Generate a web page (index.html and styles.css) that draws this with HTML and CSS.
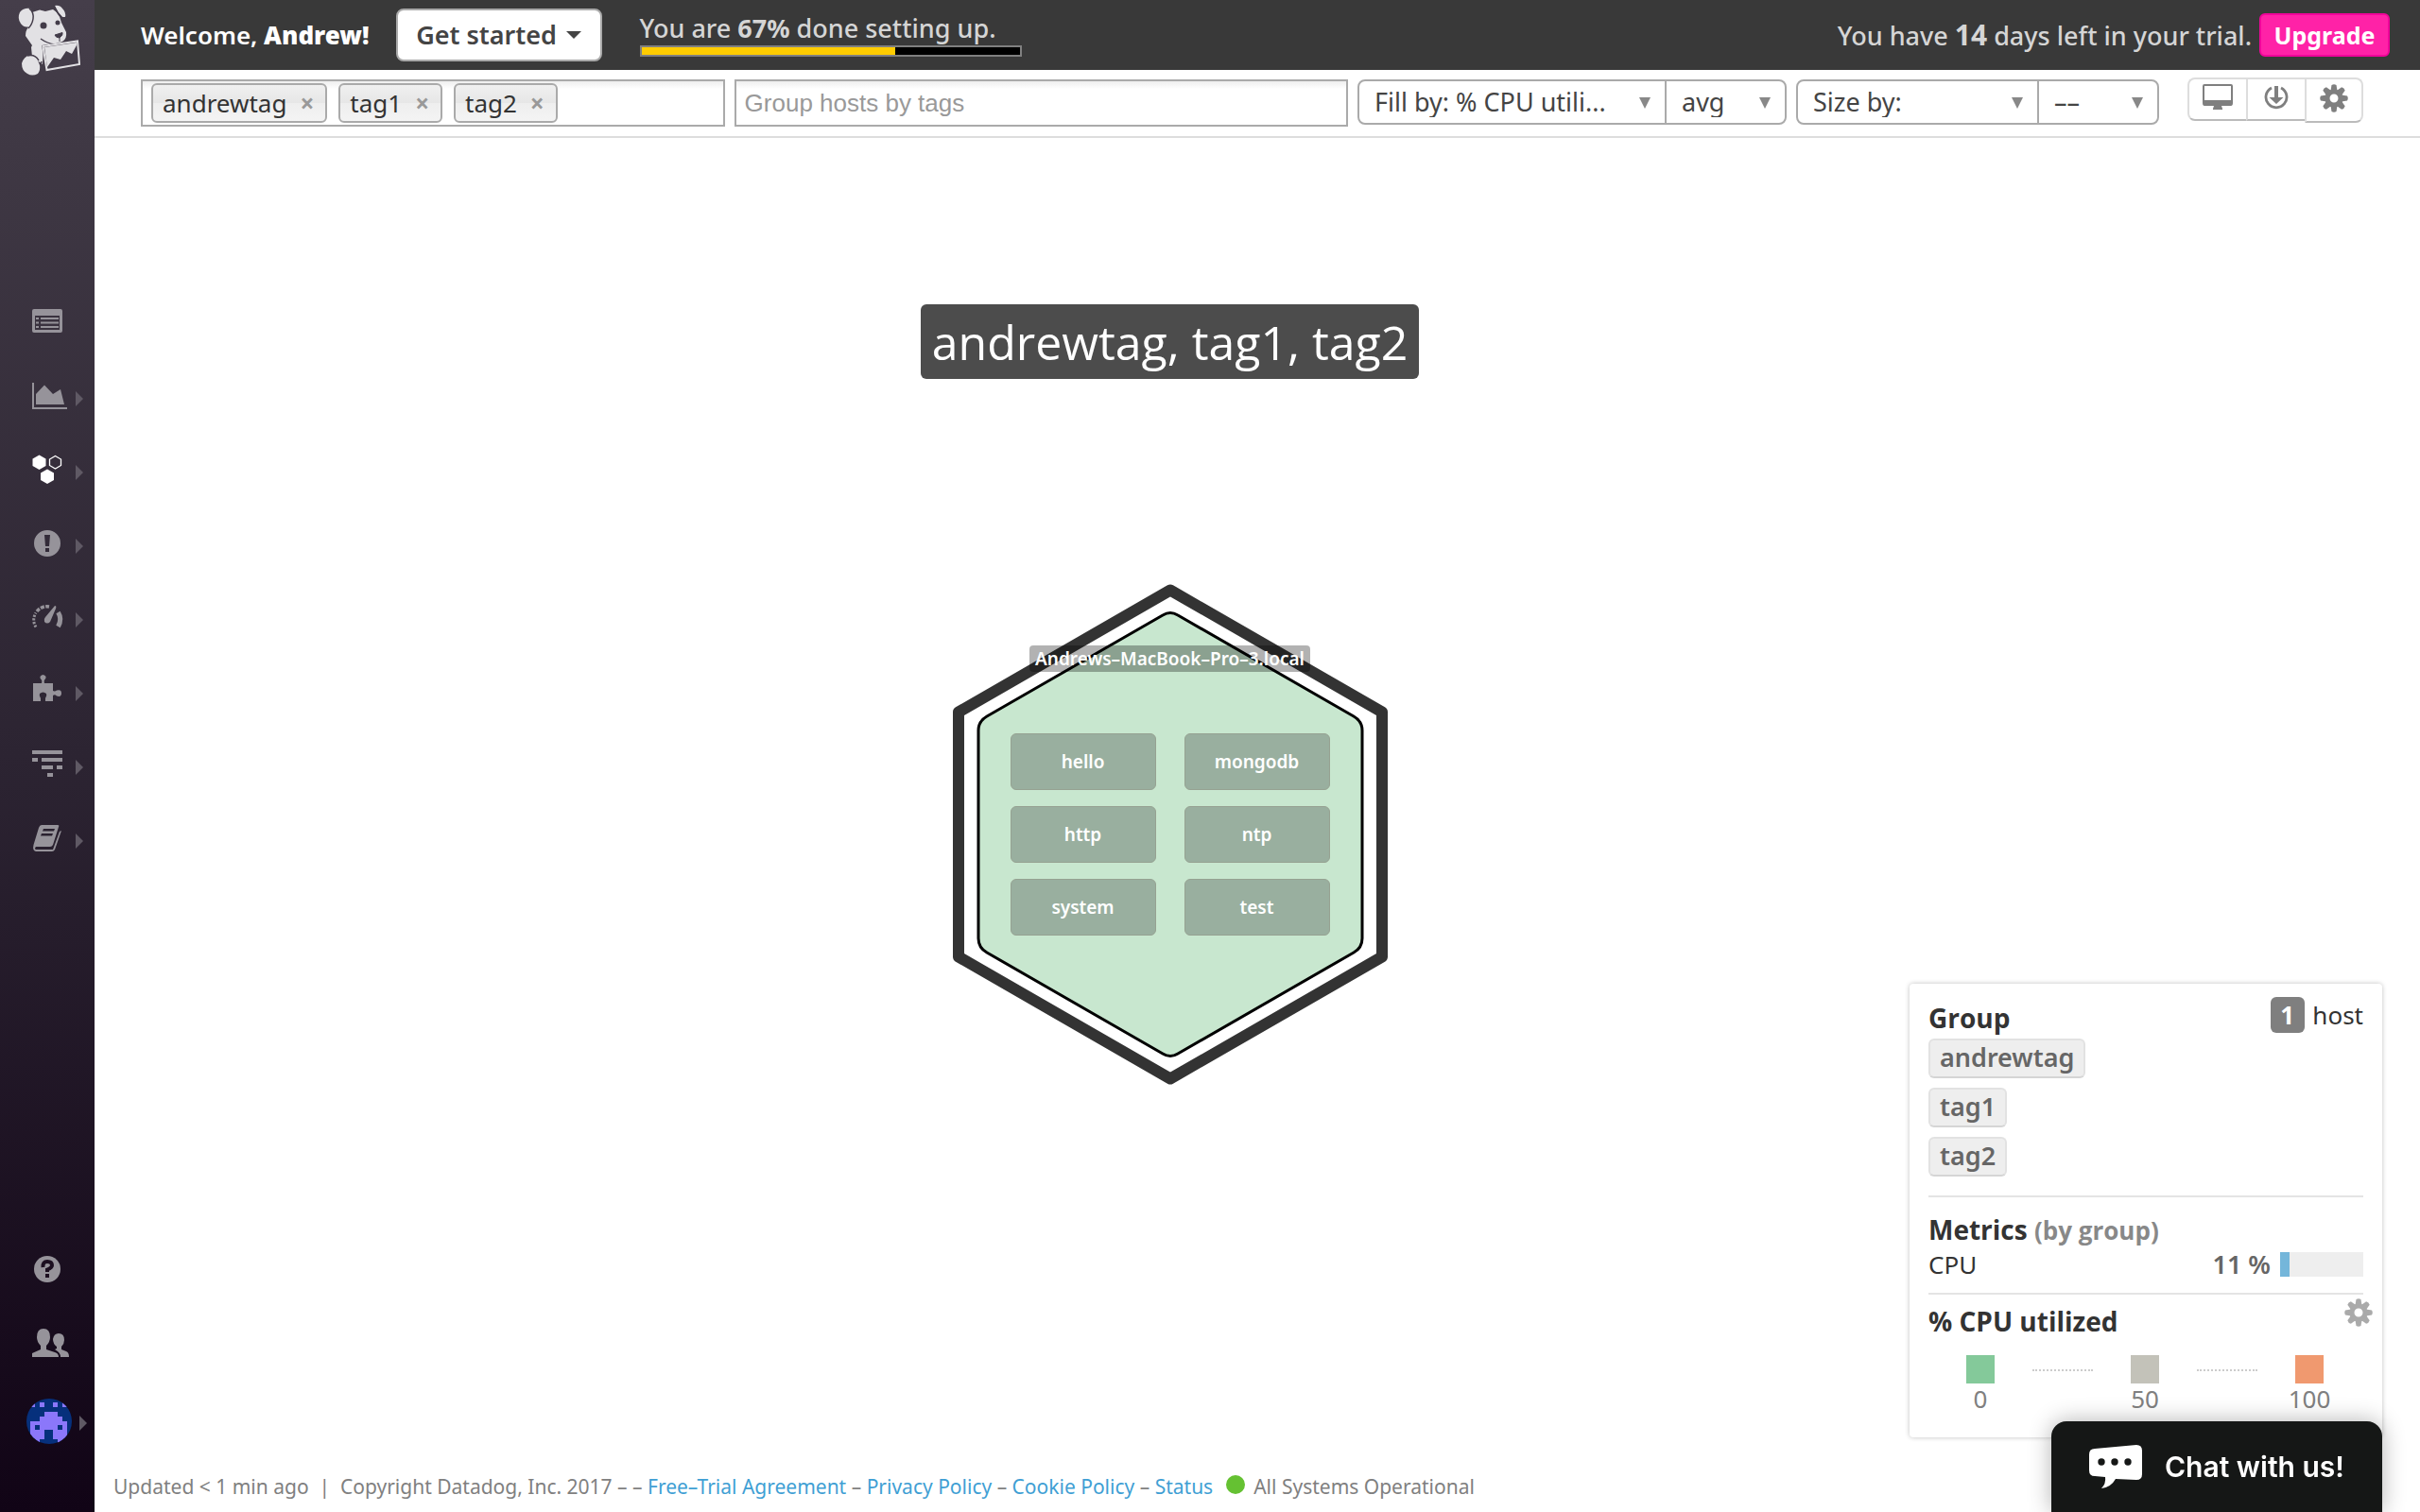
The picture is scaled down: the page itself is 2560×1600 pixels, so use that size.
FILE: index.html
```html
<!DOCTYPE html>
<html lang="en">
<head>
<meta charset="utf-8">
<title>Host Map | Datadog</title>
<link rel="stylesheet" href="styles.css">
</head>
<body>
<svg class="defs" aria-hidden="true">
  <defs>
    <g id="gear">
      <path fill-rule="evenodd" d="M15 5.500a9.500 9.500 0 1 0 0 19a9.500 9.500 0 1 0 0-19zM15 10.500a4.500 4.500 0 1 1 0 9a4.500 4.500 0 1 1 0-9z"/>
      <g id="teeth">
        <path id="tooth" d="M11.500 7l1-6q2.500-1.500 5 0l1 6z"/>
        <use href="#tooth" transform="rotate(45 15 15)"/>
        <use href="#tooth" transform="rotate(90 15 15)"/>
        <use href="#tooth" transform="rotate(135 15 15)"/>
      </g>
      <use href="#teeth" transform="rotate(180 15 15)"/>
    </g>
  </defs>
</svg>
<aside class="sidebar">
  <a class="logo" href="#" aria-label="Datadog">
    <svg width="100" height="90" viewBox="0 0 100 90">
      <g fill="#e2e1e4">
        <path d="M34 13L42 10.500 48 12 56 10 60 13Q64 18 65 24L70 34Q71 41 66 44L62 45.500 46 48 45 68 34 60 33 50 34 48 27 38Q27 32 30 29Z"/>
        <path d="M32 9Q25 8 21 13Q18 19 22 25Q26 30 31 28L36 18Z"/>
        <path d="M58 6Q63 5 66 9Q70 13 69 18L66 18Q61 13 58 6Z"/>
        <path d="M32 58Q25 60 23 67Q23 75 29 78Q34 81 40 78Q43 74 42 69Q40 61 32 58Z"/>
      </g>
      <path d="M31 9Q36 13 35 20Q34 26 30 30M57 6Q60 14 66 19M43 41Q50 46 58 47M29 59Q37 57 41 64M44 65L43 68" fill="none" stroke="#433c49" stroke-width="1.500"/>
      <circle cx="46" cy="27" r="3.500" fill="#433c49"/>
      <circle cx="61" cy="24" r="2.500" fill="#433c49"/>
      <path d="M58 37L66 34.500Q67 37 63 40Q59 40 58 37ZM63 40V44" fill="#433c49" stroke="#433c49"/>
      <path d="M44 48L82 43 85 69 49 75Z" fill="#433c49"/>
      <path d="M45.500 49L82 43.500 84 68 49.500 74Z" fill="none" stroke="#e2e1e4" stroke-width="2"/>
      <path d="M47 50L81 45 81 48 76 57 70 54 64 63 57 61 50 71Z" fill="#e2e1e4"/>
    </svg>
  </a>
  <nav class="nav-main" aria-label="Main">
    <a href="#" aria-label="Events"><svg viewBox="0 0 100 78"><path fill-rule="evenodd" d="M36 22H64Q66 22 66 24V45Q66 47 64 47H36Q34 47 34 45V24Q34 22 36 22ZM37 29V44H63V29Z"/><path d="M38 31h3v2h-3zM43 31h19v2H43zM38 35.500h3v2h-3zM43 35.500h19v2H43zM38 40h3v2h-3zM43 40h19v2H43z"/></svg></a>
    <a href="#" aria-label="Dashboards"><svg viewBox="0 0 100 78"><path d="M34 22h2v26h35v2H34zM38 45V34L47 24.500 56 34 64 29 68 45z"/><path class="arrow" d="M80 31L88 39 80 47z"/></svg></a>
    <a class="active" href="#" aria-label="Infrastructure"><svg viewBox="0 0 100 78"><path d="M41.500 20.500L48.500 24.500V32L41.500 36 34.500 32V24.500zM50 35.500L57 39.500V47L50 51 43 47V39.500z"/><path d="M58.500 21.500L64.500 25V31.500L58.500 35 52.500 31.500V25z" fill="none" stroke="#fff" stroke-width="1.300"/><path class="arrow" d="M80 31L88 39 80 47z"/></svg></a>
    <a href="#" aria-label="Monitors"><svg viewBox="0 0 100 78"><path fill-rule="evenodd" d="M50 22a14 14 0 1 0 0 28a14 14 0 1 0 0-28zM47 27h6l-1 12h-4zM48 41h4v4h-4z"/><path class="arrow" d="M80 31L88 39 80 47z"/></svg></a>
    <a href="#" aria-label="Metrics"><svg viewBox="0 0 100 78"><path d="M58 24Q60 24 59 27L53 41Q50 44 47 41Q46 38 48 36z"/><path d="M38 46.500A13.500 13.500 0 0 1 38 31.500" fill="none" stroke="#96939a" stroke-width="3" stroke-dasharray="2.200 1.500"/><path d="M39 30A13.500 13.500 0 0 1 52 25" fill="none" stroke="#96939a" stroke-width="3.500" stroke-dasharray="4 1.300"/><path d="M61.500 31Q66 38 61.500 46" fill="none" stroke="#96939a" stroke-width="5"/><path class="arrow" d="M80 31L88 39 80 47z"/></svg></a>
    <a href="#" aria-label="Integrations"><svg viewBox="0 0 100 78"><path d="M35 28H44Q45 25 43 23.500Q41 20 45.500 19Q50 20 48 23.500Q46 25 47 28H56V36Q58 37 60 35.500Q65 34 65 38.500Q65 43 60 41.500Q58 39.500 56 41V47H48V44Q50 41 49 39Q45.500 36 42 39Q41 41 43 44V47H35z"/><path class="arrow" d="M80 31L88 39 80 47z"/></svg></a>
    <a href="#" aria-label="APM"><svg viewBox="0 0 100 78"><path d="M34 21h32v4H34zM34 29h6v4h-6zM44 29h22v4H44zM44 37h12v4H44zM60 37h6v4h-6zM50 45h6v4h-6z"/><path class="arrow" d="M80 31L88 39 80 47z"/></svg></a>
    <a href="#" aria-label="Notebooks"><svg viewBox="0 0 100 78"><path fill-rule="evenodd" d="M44 22H61Q63 22 62 24L56 43Q55 45 53 45H38Q36 47 38 48H56L63 29 65 28 58 48Q57 50 55 50H38Q34 49 35.500 43L41 25Q42 22 44 22zM46 26L45 28.500H57L58 26zM44 31L43 33.500H55L56 31z"/><path class="arrow" d="M80 31L88 39 80 47z"/></svg></a>
  </nav>
  <nav class="nav-user" aria-label="Account">
    <a href="#" aria-label="Help"><svg viewBox="0 0 100 78"><circle cx="50" cy="39" r="14"/><path d="M45.500 37Q45 31 50 31Q55 31 55 35Q55 37.500 50 39.500V42M50 44v4" fill="none" stroke="#1c0f20" stroke-width="4"/></svg></a>
    <a href="#" aria-label="Team"><svg viewBox="0 0 100 78"><path d="M34 54V50L43 46V42Q39 38 39 33Q39 24 46 24Q53 24 53 33Q53 38 49 42V46L58 49Q62 50 62 54zM64 54Q64 49 58 46L60 45V43Q56 40 56 35Q57 29 62 29Q68 29 68 36Q68 40 65 43V46L70 48Q73 49 73 54z"/></svg></a>
    <a href="#" aria-label="Profile"><svg viewBox="0 0 100 78"><defs><clipPath id="round"><circle cx="52" cy="44" r="24"/></clipPath></defs><g clip-path="url(#round)"><path fill="#06307c" d="M28 20h48v48H28z"/><path fill="#8b77fa" fill-rule="evenodd" d="M32 24h5v5h-5zM42 24h5v5h-5zM56 24h5v5h-5zM66 24h5v5h-5zM47 34H61V39H66V44H71V68H61V63H56V53H47V63H42V68H32V44H42V39H47zM37 48V53H42V48zM61 48V53H66V48z"/></g><path class="arrow" d="M84 38L92 46 84 54z"/></svg></a>
  </nav>
</aside>

<div class="page">
  <header class="topbar">
    <p class="welcome">Welcome, <b>Andrew!</b></p>
    <button class="get-started" type="button">Get started <span class="caret"></span></button>
    <div class="setup">
      <p>You are <b>67%</b> done setting up.</p>
      <div class="progress"><div class="progress-fill" style="width: 67%"></div></div>
    </div>
    <p class="trial">You have <b>14</b> days left in your trial.</p>
    <button class="upgrade" type="button">Upgrade</button>
  </header>

  <form class="toolbar">
    <div class="tag-field">
      <span class="token">andrewtag <button type="button" aria-label="Remove andrewtag">×</button></span>
      <span class="token">tag1 <button type="button" aria-label="Remove tag1">×</button></span>
      <span class="token">tag2 <button type="button" aria-label="Remove tag2">×</button></span>
    </div>
    <input class="group-field" type="text" placeholder="Group hosts by tags" aria-label="Group hosts by tags">
    <div class="select-group">
      <span class="pick pick-fill"><select aria-label="Fill by"><option>Fill by: % CPU utili...</option></select></span>
      <span class="pick pick-agg"><select aria-label="Fill aggregation"><option>avg</option></select></span>
    </div>
    <div class="select-group">
      <span class="pick pick-size"><select aria-label="Size by"><option>Size by:</option></select></span>
      <span class="pick pick-agg"><select aria-label="Size aggregation"><option>––</option></select></span>
    </div>
    <div class="tools">
      <button type="button" aria-label="Full screen"><svg width="32" height="28" viewBox="0 0 32 28"><path fill-rule="evenodd" d="M2 0H30Q32 0 32 2V20Q32 23 30 23H20L21 26V27H11V26L12 23H2Q0 23 0 20V2Q0 0 2 0zM2 2V17H30V2z"/></svg></button>
      <button type="button" aria-label="Save"><svg width="26" height="28" viewBox="0 0 26 28"><path d="M11 2h4v12h5.500L13 21 5.500 14H11z"/><path d="M8 4A11 11 0 1 0 18 4" fill="none" stroke="#7f7f7f" stroke-width="2.800"/></svg></button>
      <button type="button" class="settings" aria-label="Settings"><svg width="30" height="30" viewBox="0 0 30 30"><use href="#gear"/></svg></button>
    </div>
  </form>

  <main class="map">
    <h1 class="map-title">andrewtag, tag1, tag2</h1>
    <section class="host">
      <svg class="host-shape" width="460" height="532" viewBox="0 0 460 532">
        <path d="M230 7.500L454 136.500V395.500L230 524.500 6 395.500V136.500z" fill="#fff" stroke="#333" stroke-width="12" stroke-linejoin="round"/>
        <path d="M222 34Q230 29 238 34L424 141Q433 146 433 156V376Q433 386 424 391L238 498Q230 503 222 498L36 391Q27 386 27 376V156Q27 146 36 141z" fill="#c8e7cf" stroke="#000" stroke-width="3"/>
      </svg>
      <div class="host-content">
        <span class="host-name">Andrews–MacBook–Pro–3.local</span>
        <div class="apps">
          <button type="button">hello</button>
          <button type="button">mongodb</button>
          <button type="button">http</button>
          <button type="button">ntp</button>
          <button type="button">system</button>
          <button type="button">test</button>
        </div>
      </div>
    </section>

    <section class="panel">
      <div class="panel-head">
        <h2>Group</h2>
        <p class="count"><b>1</b> host</p>
      </div>
      <ul class="group-tags">
        <li>andrewtag</li>
        <li>tag1</li>
        <li>tag2</li>
      </ul>
      <div class="metrics">
        <h2>Metrics <small>(by group)</small></h2>
        <div class="metric"><span>CPU</span><b>11 %</b><div class="bar"><div class="bar-fill" style="width: 11%"></div></div></div>
      </div>
      <div class="legend">
        <div class="legend-head">
          <h2>% CPU utilized</h2>
          <button type="button" aria-label="Legend settings"><svg width="30" height="30" viewBox="0 0 30 30"><use href="#gear"/></svg></button>
        </div>
        <div class="scale">
          <span class="stop"><i class="swatch low"></i>0</span>
          <span class="dots"></span>
          <span class="stop"><i class="swatch mid"></i>50</span>
          <span class="dots"></span>
          <span class="stop"><i class="swatch high"></i>100</span>
        </div>
      </div>
    </section>
  </main>

  <footer class="footer">
    <span>Updated &lt; 1 min ago&nbsp; |&nbsp; Copyright Datadog, Inc. 2017 – – <a href="#">Free–Trial Agreement</a> – <a href="#">Privacy Policy</a> – <a href="#">Cookie Policy</a> – <a href="#">Status</a></span>
    <span class="status-dot"></span>
    <span>All Systems Operational</span>
  </footer>
</div>

<button class="chat" type="button">
  <svg width="56" height="46" viewBox="0 0 56 46"><path fill="#fff" d="M6 4L50 0Q56 0 56 6V31Q56 37 50 37L28 36Q23 45 13 46Q18 41 17 34L6 33Q0 33 0 27V10Q0 4 6 4z"/><g fill="#151716"><circle cx="13" cy="18" r="3.700"/><circle cx="27" cy="18" r="3.700"/><circle cx="41" cy="18" r="3.700"/></g></svg>
  Chat with us!
</button>
</body>
</html>
```
FILE: styles.css
```css
* {
  box-sizing: border-box;
}

body {
  margin: 0;
  min-height: 100vh;
  display: flex;
  background: #fff;
  color: #333;
  font-family: "Noto Sans", sans-serif;
  font-size: 26px;
  line-height: 32px;
}

p,
h1,
h2,
ul {
  margin: 0;
  padding: 0;
}

button,
input,
select {
  font: inherit;
  color: inherit;
  margin: 0;
}

button {
  padding: 0;
  border: 0;
  background: none;
}

svg {
  display: block;
}

.defs {
  position: absolute;
  width: 0;
  height: 0;
}

/* Sidebar */

.sidebar {
  flex: none;
  width: 100px;
  display: flex;
  flex-direction: column;
  background: linear-gradient(#453e4a, #3f3844 10%, #2c2432 50%, #110416);
}

.nav-main {
  padding-top: 215px;
}

.nav-user {
  margin-top: auto;
  padding-bottom: 62px;
}

.sidebar nav a {
  display: block;
  height: 78px;
  fill: #96939a;
}

.sidebar nav a.active {
  fill: #fff;
}

.arrow {
  fill: #5f5964;
}

/* Top bar */

.page {
  flex: 1;
  min-width: 0;
  display: flex;
  flex-direction: column;
}

.topbar {
  height: 74px;
  padding: 0 32px 0 49px;
  display: flex;
  align-items: center;
  background: #393939;
  color: #d5d5d5;
}

.welcome {
  color: #fff;
  font-weight: 600;
}

.get-started {
  width: 218px;
  height: 56px;
  margin-left: 28px;
  display: flex;
  align-items: center;
  justify-content: center;
  gap: 10px;
  border: 2px solid #aaa;
  border-radius: 8px;
  background: #fff;
  color: #444;
  font-size: 27px;
  font-weight: 600;
}

.caret {
  border: 8px solid transparent;
  border-top-color: #444;
  border-bottom: 0;
}

.setup {
  width: 404px;
  margin-left: 40px;
  font-size: 27px;
  font-weight: 500;
  white-space: nowrap;
}

.progress {
  height: 12px;
  margin-top: 2px;
  border: 2px solid #808080;
  background: #000;
}

.progress-fill {
  height: 100%;
  background: #fc0;
}

.trial {
  margin-left: auto;
  font-size: 27px;
  font-weight: 500;
}

.trial b {
  font-size: 30px;
}

.upgrade {
  width: 138px;
  height: 46px;
  margin-left: 8px;
  border: 2px solid #f0059a;
  border-radius: 6px;
  background: #ff22a7;
  color: #fff;
  font-size: 25px;
  font-weight: 700;
}

/* Toolbar */

.toolbar {
  height: 72px;
  padding: 10px 60px 0 49px;
  display: flex;
  align-items: flex-start;
  gap: 10px;
  border-bottom: 2px solid #ddd;
}

.tag-field,
.group-field {
  height: 50px;
  min-width: 0;
  border: 2px solid #aaa;
  background: linear-gradient(#eee, #fff 8px);
}

.tag-field {
  flex: 617;
  padding: 2px 9px;
  display: flex;
  gap: 12px;
}

.token {
  height: 42px;
  padding: 0 12px 0 10px;
  display: flex;
  align-items: center;
  gap: 14px;
  border: 2px solid #aaa;
  border-radius: 6px;
  background: linear-gradient(#f0f0f0, #e6e6e6 50%, #eee 50%, #f4f4f4);
}

.token button {
  color: #999;
  font-weight: 700;
}

.group-field {
  flex: 650;
  padding: 0 9px;
  font-family: "Liberation Sans", sans-serif;
}

.group-field::placeholder {
  color: #999;
}

.select-group {
  height: 48px;
  display: flex;
  border: 2px solid #aaa;
  border-radius: 8px;
}

.pick {
  position: relative;
  display: block;
}

.pick + .pick {
  border-left: 2px solid #aaa;
}

.pick::after {
  content: "";
  position: absolute;
  top: 17px;
  right: 15px;
  border: 6px solid transparent;
  border-top: 12px solid #888;
  border-bottom: 0;
  pointer-events: none;
}

.pick select {
  width: 100%;
  height: 44px;
  padding: 0 16px;
  border: 0;
  background: none;
  color: #444;
  font-size: 27px;
  appearance: none;
}

.pick-fill {
  width: 323px;
}

.pick-size {
  width: 253px;
}

.pick-agg {
  width: 127px;
}

.tools {
  margin: -2px 0 0 20px;
  display: flex;
  align-items: flex-start;
}

.tools button {
  width: 62px;
  height: 46px;
  padding-bottom: 4px;
  display: flex;
  align-items: center;
  justify-content: center;
  border: 2px solid #ddd;
  border-bottom-color: #bbb;
  border-right-width: 0;
  fill: #7f7f7f;
}

.tools button:first-child {
  border-radius: 8px 0 0 8px;
}

.tools .settings {
  height: 48px;
  border-right-width: 2px;
  border-radius: 0 8px 8px 0;
}

/* Host map */

.map {
  position: relative;
  flex: 1;
  padding: 176px 185px 0 0;
  display: flex;
  flex-direction: column;
  align-items: center;
}

.map-title {
  padding: 4px 12px 3px;
  border-radius: 6px;
  background: #4c4c4c;
  color: #fff;
  font: 400 50px/72px "Open Sans", sans-serif;
}

.host {
  margin-top: 216px;
  display: grid;
}

.host-shape,
.host-content {
  grid-area: 1 / 1;
}

.host-content {
  padding-top: 66px;
  display: flex;
  flex-direction: column;
  align-items: center;
  color: #fff;
  font-size: 19px;
  font-weight: 600;
  line-height: 28px;
}

.host-name {
  padding: 0 6px;
  border-radius: 4px;
  background: rgba(0, 0, 0, 0.3);
}

.apps {
  margin-top: 65px;
  display: grid;
  grid-template-columns: 154px 154px;
  gap: 17px 30px;
}

.apps button {
  height: 60px;
  border: 1px solid #96a292;
  border-radius: 6px;
  background: #99af9f;
}

/* Group panel */

.panel {
  position: absolute;
  right: 40px;
  bottom: 24px;
  width: 500px;
  height: 480px;
  padding: 16px 20px;
  border-radius: 4px;
  background: #fff;
  box-shadow: 0 0 5px rgba(0, 0, 0, 0.25);
}

.panel h2 {
  font: 700 28px/40px "Open Sans", sans-serif;
}

.panel small {
  color: #888;
  font-size: 26px;
}

.panel-head,
.metric,
.legend-head {
  display: flex;
  justify-content: space-between;
}

.count {
  margin-top: -2px;
}

.count b {
  display: inline-block;
  width: 36px;
  height: 38px;
  margin-right: 2px;
  border-radius: 6px;
  background: #7f7f7f;
  color: #fff;
  line-height: 38px;
  text-align: center;
}

.group-tags {
  margin-top: 2px;
  display: flex;
  flex-direction: column;
  align-items: flex-start;
  gap: 10px;
  list-style: none;
}

.group-tags li {
  height: 42px;
  padding: 0 10px;
  border: 2px solid #e2e2e2;
  border-bottom-color: #d5d5d5;
  border-radius: 6px;
  background: #eee;
  color: #666;
  font-size: 27px;
  font-weight: 600;
  line-height: 36px;
}

.metrics {
  margin-top: 20px;
  padding: 14px 0;
  border: 2px solid #e4e4e4;
  border-width: 2px 0;
}

.metric {
  align-items: center;
}

.metric b {
  margin-left: auto;
  color: #666;
  font-size: 27px;
  font-weight: 600;
}

.bar {
  width: 88px;
  height: 26px;
  margin-left: 10px;
  background: #eee;
}

.bar-fill {
  height: 100%;
  background: #74b6da;
}

.legend-head {
  margin-right: -10px;
  padding-top: 4px;
  align-items: flex-start;
}

.legend-head h2 {
  padding-top: 4px;
}

.legend-head button {
  fill: #aaa;
}

.scale {
  padding: 16px 22px 0 20px;
  display: flex;
  justify-content: space-between;
  color: #808080;
}

.stop {
  width: 70px;
  display: flex;
  flex-direction: column;
  align-items: center;
}

.swatch {
  width: 30px;
  height: 30px;
}

.low {
  background: #84c99a;
}

.mid {
  background: #c3c2b9;
}

.high {
  background: #f0996f;
}

.dots {
  width: 64px;
  margin-top: 15px;
  border-top: 2px dotted #ccc;
}

/* Footer and chat */

.footer {
  height: 55px;
  padding: 0 20px;
  display: flex;
  align-items: center;
  gap: 9px;
  color: #808080;
  font-size: 21px;
}

.footer a {
  color: #3f9fd4;
  text-decoration: none;
}

.status-dot {
  width: 20px;
  height: 20px;
  margin: -4px 0 0 5px;
  border-radius: 50%;
  background: #65c132;
}

.chat {
  position: fixed;
  right: 40px;
  bottom: 0;
  width: 350px;
  height: 96px;
  display: flex;
  align-items: center;
  justify-content: center;
  gap: 24px;
  border-radius: 16px 16px 0 0;
  background: #151716;
  box-shadow: 0 0 24px rgba(0, 0, 0, 0.3);
  color: #fff;
  font: 600 30px/36px Inter, sans-serif;
}
```
